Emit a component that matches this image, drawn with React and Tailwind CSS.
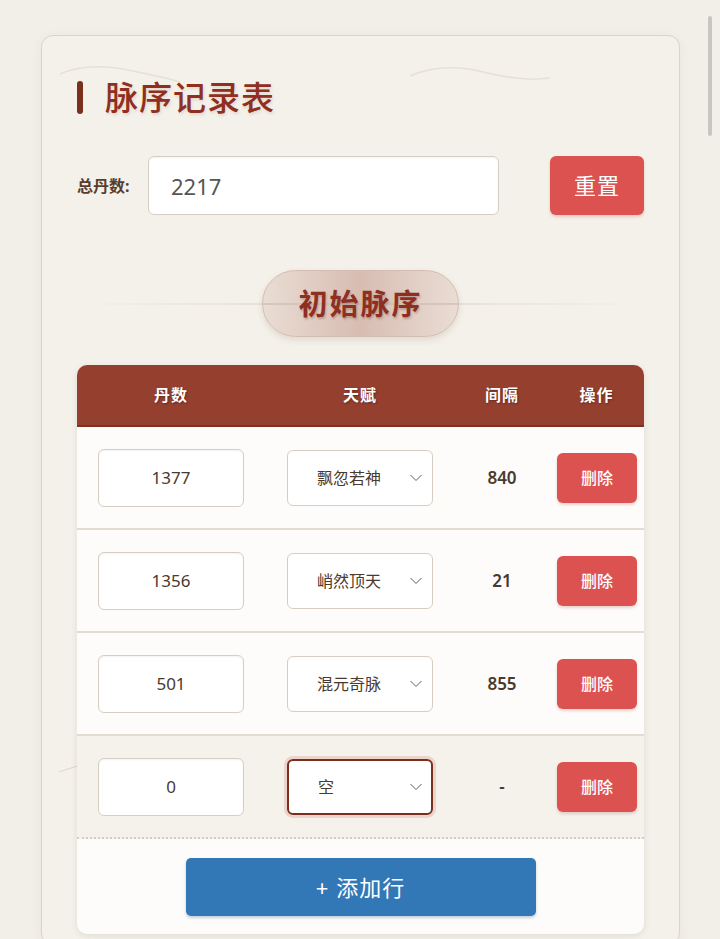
import React, { useState } from 'react';

const FONT = { fontFamily: '"Noto Sans", "Noto Sans CJK SC", sans-serif' };

const TALENTS = ['空', '飘忽若神', '峭然顶天', '混元奇脉'];

const initialRows = [
  { id: 1, dan: '1377', talent: '飘忽若神', gap: '840' },
  { id: 2, dan: '1356', talent: '峭然顶天', gap: '21' },
  { id: 3, dan: '501', talent: '混元奇脉', gap: '855' },
  { id: 4, dan: '0', talent: '空', gap: '-', focus: true },
];

function Chevron() {
  return (
    <svg className="pointer-events-none absolute right-[10px] top-1/2 -translate-y-1/2" width="14" height="9" viewBox="0 0 14 9" fill="none">
      <path d="M1.5 1.5 L7 7 L12.5 1.5" stroke="#6b5a4e" strokeWidth="1" />
    </svg>
  );
}

export default function App() {
  const [total, setTotal] = useState('2217');
  const [rows, setRows] = useState(initialRows);

  const removeRow = (id) => setRows(prev => prev.filter(r => r.id !== id));
  const addRow = () => setRows(prev => [...prev, { id: Date.now(), dan: '0', talent: '空', gap: '-' }]);

  return (
    <div className="min-h-[939px] bg-[#f2efe8] pt-[35px] pb-10" style={FONT}>
      {/* overlay scroll thumb */}
      <div className="fixed right-[8px] top-[16px] h-[120px] w-[4px] rounded-full bg-[#c9c6c1]" />

      <div className="relative ml-[41px] w-[639px] overflow-hidden rounded-[12px] border border-[#dcd4c7] bg-[#f4f1ea] px-[35px] pb-[10px] shadow-[0_2px_10px_rgba(120,100,80,0.08)]">
        {/* faint brush waves */}
        <svg className="pointer-events-none absolute left-[16px] top-[26px]" width="560" height="30" viewBox="0 0 560 30" fill="none">
          <path d="M2 12 Q 30 0 70 8 T 122 20" stroke="#e6e0d6" strokeWidth="1.5" />
          <path d="M352 14 Q 385 0 425 10 T 492 16" stroke="#e6e0d6" strokeWidth="1.5" />
        </svg>
        <svg className="pointer-events-none absolute left-[16px] top-[726px]" width="24" height="12" viewBox="0 0 24 12" fill="none">
          <path d="M1 10 L 22 3" stroke="#ddd6cb" strokeWidth="1" />
        </svg>

        <div className="relative flex items-center gap-[22px] pt-[45px]">
          <span className="h-[33px] w-[6px] rounded-full bg-[#7b2f1d]" />
          <h1 className="text-[33px] font-medium leading-none tracking-[1px] text-[#8e2f1f] [text-shadow:1px_2px_3px_rgba(120,60,40,0.15)]">脉序记录表</h1>
        </div>

        <div className="relative mt-[42px] flex items-center">
          <label className="w-[71px] text-[16px] font-bold text-[#5b3d2b]">总丹数:</label>
          <input
            value={total}
            onChange={e => setTotal(e.target.value)}
            className="h-[59px] w-[351px] rounded-[6px] border border-[#d6cec2] bg-white px-[22px] text-[22px] text-[#555] shadow-[inset_0_1px_2px_rgba(0,0,0,0.05)] outline-none"
          />
          <button className="ml-auto h-[59px] w-[94px] rounded-[6px] bg-[#dc5250] text-[22px] tracking-[1px] text-white shadow-[0_2px_3px_rgba(150,50,40,0.2)]">重置</button>
        </div>

        <div className="relative mt-[55px] flex items-center justify-center">
          <div className="absolute inset-x-[4px] top-1/2 h-[2px] -translate-y-1/2 bg-gradient-to-r from-transparent via-[#e2d9cd] to-transparent" />
          <div className="relative flex h-[67px] w-[197px] items-center justify-center rounded-full border border-[#d3bdb2] bg-[linear-gradient(90deg,#e9ddd4,#d8bcb2_50%,#e9ddd4)] shadow-[0_3px_6px_rgba(120,80,60,0.15)]">
            <div className="absolute inset-x-0 top-1/2 h-[2px] -translate-y-1/2 bg-[#cfbdb2]/70" />
            <span className="relative text-[29px] font-bold tracking-[2px] text-[#8e2f1f] [text-shadow:1px_2px_2px_rgba(90,40,30,0.25)]">初始脉序</span>
          </div>
        </div>

        <div className="relative mt-[28px] overflow-hidden rounded-[10px] bg-[#fdfcfa] shadow-[0_2px_6px_rgba(100,70,50,0.12)]">
          <div className="grid h-[62px] grid-cols-[188px_190px_94px_95px] items-center border-b-2 border-[#7d3323] bg-[#953f2f] text-[16px] font-bold tracking-[1px] text-white [text-shadow:1px_1px_2px_rgba(0,0,0,0.35)]">
            <span className="text-center">丹数</span>
            <span className="text-center">天赋</span>
            <span className="text-center">间隔</span>
            <span className="text-center">操作</span>
          </div>

          {rows.map((r, i) => (
            <div
              key={r.id}
              className={`grid h-[103px] grid-cols-[188px_190px_94px_95px] items-center ${i < rows.length - 1 ? 'border-b-2 border-[#e2dbd0]' : 'border-b-2 border-dotted border-[#d5ccbf]'} ${r.focus ? 'bg-[#f5f2ec]' : 'bg-[#fdfcfa]'}`}
            >
              <div className="pl-[21px]">
                <input
                  defaultValue={r.dan}
                  className="h-[58px] w-[146px] rounded-[6px] border border-[#d6cec2] bg-white text-center text-[17px] text-[#4a3a2e] shadow-[inset_0_1px_2px_rgba(0,0,0,0.05)] outline-none"
                />
              </div>
              <div className="pl-[22px]">
                <div className={`relative h-[56px] w-[146px] rounded-[6px] ${r.focus ? 'shadow-[0_0_0_3px_#ecd3cc]' : ''}`}>
                  <select
                    defaultValue={r.talent}
                    className={`h-full w-full appearance-none rounded-[6px] border bg-white pl-[29px] text-[16px] text-[#4a3a2e] outline-none ${r.focus ? 'border-2 border-[#7b2f1d]' : 'border-[#d6cec2]'}`}
                  >
                    {TALENTS.map(t => <option key={t} value={t}>{t}</option>)}
                  </select>
                  <Chevron />
                </div>
              </div>
              <div className="text-center text-[17px] font-semibold text-[#4a3a2e]">{r.gap}</div>
              <div className="pl-[8px]">
                <button
                  onClick={() => removeRow(r.id)}
                  className="h-[50px] w-[80px] rounded-[6px] bg-[#dc5250] text-[16px] font-medium text-white shadow-[0_2px_3px_rgba(150,50,40,0.2)]"
                >
                  删除
                </button>
              </div>
            </div>
          ))}

          <div className="flex justify-center pt-[19px] pb-[18px]">
            <button
              onClick={addRow}
              className="h-[58px] w-[350px] rounded-[5px] bg-[#3378b6] text-[22px] tracking-[1px] text-white shadow-[0_2px_3px_rgba(30,70,120,0.25)]"
            >
              + 添加行
            </button>
          </div>
        </div>
      </div>
    </div>
  );
}
